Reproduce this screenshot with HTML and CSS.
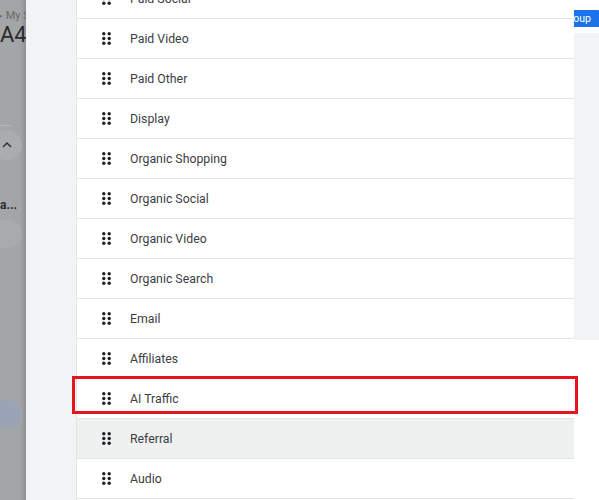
FILE: index.html
```html
<!DOCTYPE html>
<html lang="en">
<head>
    <meta charset="UTF-8">
    <meta name="viewport" content="width=device-width, initial-scale=1.0">
    <title>Channel groups - reorder</title>
    <link rel="stylesheet" href="styles.css">
</head>
<body>
    <svg width="0" height="0" class="defs">
        <symbol id="drag" viewBox="0 0 9 13">
            <circle cx="1.8" cy="1.8" r="1.7"/><circle cx="7.2" cy="1.8" r="1.7"/>
            <circle cx="1.8" cy="6.5" r="1.7"/><circle cx="7.2" cy="6.5" r="1.7"/>
            <circle cx="1.8" cy="11.2" r="1.7"/><circle cx="7.2" cy="11.2" r="1.7"/>
        </symbol>
    </svg>

    <div class="page">
        <!-- page behind the dialog, dimmed -->
        <div class="backdrop">
            <div class="crumb">&#9656; My S</div>
            <div class="title">A4</div>
            <div class="rule"></div>
            <div class="round-btn">
                <svg width="10" height="6" viewBox="0 0 10 6"><path d="M1 5 L5 1 L9 5" fill="none" stroke="#2b2c2e" stroke-width="1.4"/></svg>
            </div>
            <div class="bold-label">a...</div>
            <div class="pill"></div>
            <div class="pill pill-blue"></div>
        </div>

        <div class="sidebar"></div>

        <!-- Lista de canais -->
        <ul class="channel-list">
            <li class="channel"><svg class="handle"><use href="#drag"/></svg>Paid Social</li>
            <li class="channel"><svg class="handle"><use href="#drag"/></svg>Paid Video</li>
            <li class="channel"><svg class="handle"><use href="#drag"/></svg>Paid Other</li>
            <li class="channel"><svg class="handle"><use href="#drag"/></svg>Display</li>
            <li class="channel"><svg class="handle"><use href="#drag"/></svg>Organic Shopping</li>
            <li class="channel"><svg class="handle"><use href="#drag"/></svg>Organic Social</li>
            <li class="channel"><svg class="handle"><use href="#drag"/></svg>Organic Video</li>
            <li class="channel"><svg class="handle"><use href="#drag"/></svg>Organic Search</li>
            <li class="channel"><svg class="handle"><use href="#drag"/></svg>Email</li>
            <li class="channel"><svg class="handle"><use href="#drag"/></svg>Affiliates</li>
            <li class="channel"><svg class="handle"><use href="#drag"/></svg>AI Traffic</li>
            <li class="channel hover"><svg class="handle"><use href="#drag"/></svg>Referral</li>
            <li class="channel"><svg class="handle"><use href="#drag"/></svg>Audio</li>
            <li class="channel"><svg class="handle"><use href="#drag"/></svg>SMS</li>
        </ul>

        <div class="aside">
            <div class="aside-top">
                <div class="btn-clip"><span class="btn">Create group</span></div>
            </div>
            <div class="aside-panel"></div>
        </div>

        <!-- annotation box -->
        <div class="highlight"></div>
    </div>
</body>
</html>
```

FILE: styles.css
```css
html, body {
    margin: 0;
    padding: 0;
    background: #fff;
}
.defs {
    position: absolute;
}
.page {
    position: relative;
    display: flex;
    width: 599px;
    height: 500px;
    overflow: hidden;
    font-family: Roboto, "Liberation Sans", Arial, sans-serif;
}

/* dimmed page */
.backdrop {
    width: 26px;
    flex: none;
    overflow: hidden;
    background: linear-gradient(to right, #a5a6a8 0, #a3a4a6 78%, #8f9092 100%);
    color: #2b2c2e;
}
.crumb {
    margin-top: 9px;
    font-size: 11px;
    line-height: 14px;
    color: #68696b;
    white-space: nowrap;
    margin-left: -3px;
}
.title {
    font-size: 22px;
    line-height: 24px;
    white-space: nowrap;
    color: #2a2b2d;
}
.rule {
    margin-top: 78px;
    width: 12px;
    height: 1px;
    background: #b4b5b7;
}
.round-btn {
    margin-top: 4px;
    margin-left: -8px;
    width: 30px;
    height: 30px;
    border-radius: 50%;
    background: #abacae;
    display: flex;
    align-items: center;
    justify-content: center;
}
.bold-label {
    margin-top: 38px;
    font-size: 12px;
    line-height: 14px;
    font-weight: bold;
    white-space: nowrap;
}
.pill {
    margin-top: 8px;
    margin-left: -20px;
    width: 42px;
    height: 28px;
    border-radius: 14px;
    background: #a9aaac;
}
.pill-blue {
    margin-top: 152px;
    background: #9ba4b4;
}

.sidebar {
    width: 50px;
    flex: none;
    background: #f1f3f4;
    border-right: 1px solid #e3e4e6;
}

/* list */
.channel-list {
    list-style: none;
    margin: -21px 0 0;
    padding: 0;
    width: 497px;
    flex: none;
}
.channel {
    display: flex;
    align-items: center;
    height: 39px;
    border-bottom: 1px solid #e3e4e6;
    padding-left: 25px;
    font-size: 12.3px;
    color: #3c4043;
    background: #fff;
}
.channel.hover {
    background: #eff0f0;
}
.handle {
    width: 9px;
    height: 13px;
    margin-right: 19px;
    fill: #202124;
    flex: none;
}

.aside {
    flex: 1;
    display: flex;
    flex-direction: column;
}
.aside-top {
    height: 33px;
    background: #fff;
    display: flex;
    align-items: flex-start;
    padding-top: 10px;
    box-sizing: border-box;
}
.btn-clip {
    width: 26px;
    height: 17px;
    overflow: hidden;
    display: flex;
    justify-content: flex-end;
    background: #1a73e8;
    border-radius: 0 2px 2px 0;
}
.btn {
    flex: none;
    padding-right: 9px;
    font-size: 10.5px;
    line-height: 17px;
    color: #fff;
    white-space: nowrap;
}
.aside-panel {
    height: 307px;
    background: #f1f3f4;
}

.highlight {
    position: absolute;
    left: 72px;
    top: 376px;
    width: 500px;
    height: 32px;
    border: 3px solid #e8141d;
}
```
